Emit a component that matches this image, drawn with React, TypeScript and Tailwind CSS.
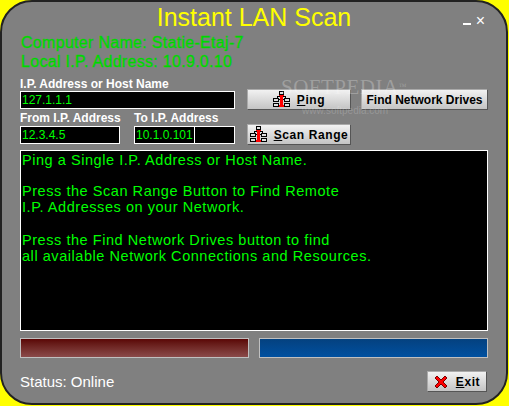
const sans = "font-['Liberation_Sans',Arial,sans-serif]";

function NetIcon() {
  return (
    <svg width="17" height="17" viewBox="0 0 17 17" shapeRendering="crispEdges" className="shrink-0">
      <rect x="6.5" y="0.5" width="4" height="3" fill="#ddd" stroke="#000" />
      <rect x="4.5" y="5.5" width="8" height="3" fill="#ddd" stroke="#000" />
      <rect x="0.5" y="7.5" width="5" height="3" fill="#ddd" stroke="#000" />
      <rect x="11.5" y="7.5" width="5" height="3" fill="#ddd" stroke="#000" />
      <rect x="0.5" y="12.5" width="5" height="3" fill="#ddd" stroke="#000" />
      <rect x="11.5" y="12.5" width="5" height="3" fill="#ddd" stroke="#000" />
      <rect x="7" y="4" width="3" height="11" fill="#f00" />
      <rect x="6" y="14" width="5" height="2" fill="#f00" />
      <rect x="6" y="4" width="5" height="1" fill="#f00" />
    </svg>
  );
}

function XIcon() {
  return (
    <svg width="14" height="14" viewBox="0 0 14 14" className="shrink-0">
      <path d="M1 3 L3 1 L7 5 L11 1 L13 3 L9 7 L13 11 L11 13 L7 9 L3 13 L1 11 L5 7 Z" fill="#f00" stroke="#700" strokeWidth="1" />
    </svg>
  );
}

function Btn({ className, children }: { className: string; children: React.ReactNode }) {
  return (
    <div className={`flex items-center justify-center whitespace-nowrap h-[21px] bg-gradient-to-b from-[#f2f2f2] to-[#c4c4c4] border border-[#555] border-t-[#aaa] border-l-[#aaa] text-black text-[12px] font-bold ${className}`}>
      {children}
    </div>
  );
}

function Field({ className, children }: { className: string; children: React.ReactNode }) {
  return (
    <div className={`flex items-center h-[18px] bg-black border border-white text-[#00ff00] text-[12px] pl-[1px] ${className}`}>
      {children}
    </div>
  );
}

export default function App() {
  return (
    <div className={`relative w-[509px] h-[406px] bg-[#ffff00] overflow-hidden ${sans}`}>
      <div className="w-[508px] h-[405px] bg-[#808080] border-2 border-[#222222] rounded-[32px] flex flex-col">
        <div className="relative h-[31px] flex justify-center items-start shrink-0">
          <span className="text-[#ffff00] text-[25px] leading-[30px]">Instant LAN Scan</span>
          <div className="absolute right-[21px] top-[12px] flex items-start gap-[5px]">
            <div className="w-[8px] h-[2px] bg-white mt-[9px]" />
            <span className="text-white text-[16px] leading-[14px]">×</span>
          </div>
        </div>
        <div className="pl-[19px] text-[#00d800] text-[16px] leading-[19px] tracking-[0.3px] [-webkit-text-stroke:0.35px_#00d800]">
          <div>Computer Name: Statie-Etaj-7</div>
          <div>Local I.P. Address: 10.9.0.10</div>
        </div>
        <div className="pl-[18px] pr-[18px] flex mt-[3px]">
          <div className="w-[227px] shrink-0 flex flex-col whitespace-nowrap">
            <div className="text-white text-[12px] font-bold leading-[14px] mt-[3px]">I.P. Address or Host Name</div>
            <Field className="w-[215px]">127.1.1.1</Field>
            <div className="flex gap-[14px] mt-[2px]">
              <div className="w-[100px]">
                <div className="text-white text-[12px] font-bold leading-[15px]">From I.P. Address</div>
                <Field className="w-[100px]">12.3.4.5</Field>
              </div>
              <div className="w-[101px]">
                <div className="text-white text-[12px] font-bold leading-[15px]">To I.P. Address</div>
                <Field className="w-[101px]"><span className="border-r border-white pr-[1px] h-[16px] leading-[16px]">10.1.0.101</span></Field>
              </div>
            </div>
          </div>
          <div className="flex flex-col mt-[15px]">
            <div className="flex gap-[10px]">
              <Btn className="w-[104px] gap-[7px] tracking-[0.6px]"><NetIcon /><span><span className="underline">P</span>ing</span></Btn>
              <Btn className="w-[127px]">Find Network Drives</Btn>
            </div>
            <Btn className="w-[104px] gap-[7px] mt-[14px] tracking-[0.6px]"><NetIcon /><span><span className="underline">S</span>can Range</span></Btn>
          </div>
        </div>
        <div className="ml-[18px] mt-[5px] w-[468px] h-[181px] bg-black border border-white text-[#00ff00] text-[14.5px] leading-[16px] tracking-[0.55px] px-[1px] pt-[1px] whitespace-nowrap">
          <div>Ping a Single I.P. Address or Host Name.</div>
          <div className="mt-[15px]">Press the Scan Range Button to Find Remote</div>
          <div>I.P. Addresses on your Network.</div>
          <div className="mt-[17px]">Press the Find Network Drives button to find</div>
          <div>all available Network Connections and Resources.</div>
        </div>
        <div className="ml-[18px] mt-[7px] flex gap-[10px]">
          <div className="w-[229px] h-[20px] border border-[#c0c0c0] bg-gradient-to-b from-[#5a0505] to-[#8a4a4a]" />
          <div className="w-[229px] h-[20px] border border-[#c0c0c0] bg-gradient-to-b from-[#04417f] to-[#0050a0]" />
        </div>
        <div className="ml-[18px] mr-[19px] mt-[13px] flex justify-between items-center">
          <span className="text-white text-[15px] leading-[21px]">Status: Online</span>
          <Btn className="w-[60px] gap-[8px] tracking-[0.6px]"><XIcon /><span><span className="underline">E</span>xit</span></Btn>
        </div>
      </div>
      <div className="absolute left-[281px] top-[75px] pointer-events-none whitespace-nowrap text-white/25 font-['Liberation_Serif',serif] text-[21px] leading-[24px] tracking-[0.5px]">SOFTPEDIA<span className="text-[8px] align-top">™</span></div>
      <div className="absolute left-[302px] top-[105px] pointer-events-none whitespace-nowrap text-white/20 text-[10px] leading-[12px]">www.softpedia.com</div>
    </div>
  );
}
